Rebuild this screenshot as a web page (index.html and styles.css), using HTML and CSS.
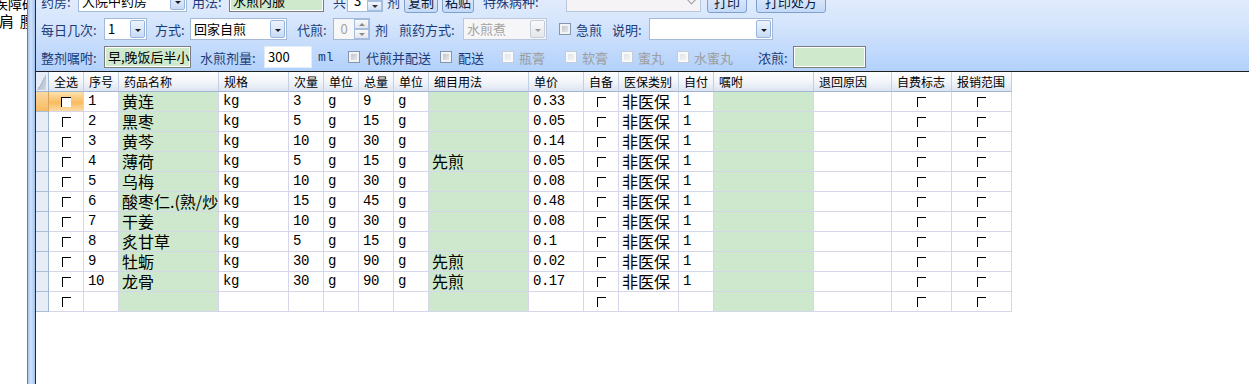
FILE: index.html
```html
<!DOCTYPE html>
<html lang="zh-CN">
<head>
    <meta charset="UTF-8">
    <title>处方录入</title>
    <link rel="stylesheet" href="styles.css">
</head>
<body>
<div class="window">
    <div class="side">
        <p class="l1">疾障碍</p>
        <p class="l2"><span>肩</span><span>腰</span></p>
    </div>
    <div class="splitter"></div>

    <div class="main">
        <div class="toolbar">
            <div class="tb-row">
                <span class="lbl w-pharmacy">药房:</span>
                <div class="combo w-pharmacy-box"><span class="val">大院中药房</span><span class="drop"></span></div>
                <span class="lbl w-usage">用法:</span>
                <div class="field green w-usage-box">水煎内服</div>
                <span class="lbl w-total">共</span>
                <div class="spin w-total-box"><span class="val">3</span><span class="arrows"><b class="up"></b><b class="down"></b></span></div>
                <span class="lbl w-ji1">剂</span>
                <div class="btn w-copy">复制</div>
                <div class="btn w-paste">粘贴</div>
                <span class="lbl w-disease">特殊病种:</span>
                <div class="combo flat w-disease-box"><span class="val"></span><span class="drop"></span></div>
                <div class="btn w-print">打印</div>
                <div class="btn w-print-rx">打印处方</div>
            </div>

            <div class="tb-row">
                <span class="lbl w-times">每日几次:</span>
                <div class="combo w-times-box"><span class="val">1</span><span class="drop"></span></div>
                <span class="lbl w-mode">方式:</span>
                <div class="combo w-mode-box"><span class="val">回家自煎</span><span class="drop"></span></div>
                <span class="lbl w-agent">代煎:</span>
                <div class="spin off w-agent-box"><span class="val">0</span><span class="arrows"><b class="up"></b><b class="down"></b></span></div>
                <span class="lbl w-ji2">剂</span>
                <span class="lbl w-method">煎药方式:</span>
                <div class="combo off w-method-box"><span class="val">水煎煮</span><span class="drop"></span></div>
                <label class="check w-urgent"><span class="chk"></span><span class="lbl">急煎</span></label>
                <span class="lbl w-note">说明:</span>
                <div class="combo w-note-box"><span class="val"></span><span class="drop"></span></div>
            </div>

            <div class="tb-row">
                <span class="lbl w-advice">整剂嘱咐:</span>
                <div class="field green w-advice-box">早,晚饭后半小时</div>
                <span class="lbl w-dose">水煎剂量:</span>
                <div class="field plain w-dose-box">300</div>
                <span class="lbl mono w-ml">ml</span>
                <label class="check w-deliver-agent"><span class="chk"></span><span class="lbl">代煎并配送</span></label>
                <label class="check w-deliver"><span class="chk"></span><span class="lbl">配送</span></label>
                <label class="check w-paste-jar"><span class="chk off"></span><span class="lbl off">瓶膏</span></label>
                <label class="check w-soft"><span class="chk off"></span><span class="lbl off">软膏</span></label>
                <label class="check w-pill"><span class="chk off"></span><span class="lbl off">蜜丸</span></label>
                <label class="check w-water-pill"><span class="chk off"></span><span class="lbl off">水蜜丸</span></label>
                <span class="lbl w-thick">浓煎:</span>
                <div class="field green w-thick-box"></div>
            </div>
        </div>

        <div class="grid">
            <div class="row head">
                <div class="c corner"></div>
                <div class="c">全选</div>
                <div class="c">序号</div>
                <div class="c">药品名称</div>
                <div class="c">规格</div>
                <div class="c">次量</div>
                <div class="c">单位</div>
                <div class="c">总量</div>
                <div class="c">单位</div>
                <div class="c">细目用法</div>
                <div class="c">单价</div>
                <div class="c">自备</div>
                <div class="c">医保类别</div>
                <div class="c">自付</div>
                <div class="c">嘱咐</div>
                <div class="c">退回原因</div>
                <div class="c">自费标志</div>
                <div class="c">报销范围</div>
            </div>

            <div class="row sel">
                <div class="c rh"></div><div class="c ck"><i class="tick"></i></div><div class="c n">1</div>
                <div class="c g cj">黄连</div><div class="c n">kg</div><div class="c n">3</div><div class="c n">g</div>
                <div class="c n">9</div><div class="c n">g</div><div class="c g cj"></div><div class="c n">0.33</div>
                <div class="c ck"><i class="tick"></i></div><div class="c cj">非医保</div><div class="c n">1</div>
                <div class="c g"></div><div class="c"></div><div class="c ck"><i class="tick"></i></div><div class="c ck"><i class="tick"></i></div>
            </div>
            <div class="row">
                <div class="c rh"></div><div class="c ck"><i class="tick"></i></div><div class="c n">2</div>
                <div class="c g cj">黑枣</div><div class="c n">kg</div><div class="c n">5</div><div class="c n">g</div>
                <div class="c n">15</div><div class="c n">g</div><div class="c g cj"></div><div class="c n">0.05</div>
                <div class="c ck"><i class="tick"></i></div><div class="c cj">非医保</div><div class="c n">1</div>
                <div class="c g"></div><div class="c"></div><div class="c ck"><i class="tick"></i></div><div class="c ck"><i class="tick"></i></div>
            </div>
            <div class="row">
                <div class="c rh"></div><div class="c ck"><i class="tick"></i></div><div class="c n">3</div>
                <div class="c g cj">黄芩</div><div class="c n">kg</div><div class="c n">10</div><div class="c n">g</div>
                <div class="c n">30</div><div class="c n">g</div><div class="c g cj"></div><div class="c n">0.14</div>
                <div class="c ck"><i class="tick"></i></div><div class="c cj">非医保</div><div class="c n">1</div>
                <div class="c g"></div><div class="c"></div><div class="c ck"><i class="tick"></i></div><div class="c ck"><i class="tick"></i></div>
            </div>
            <div class="row">
                <div class="c rh"></div><div class="c ck"><i class="tick"></i></div><div class="c n">4</div>
                <div class="c g cj">薄荷</div><div class="c n">kg</div><div class="c n">5</div><div class="c n">g</div>
                <div class="c n">15</div><div class="c n">g</div><div class="c g cj">先煎</div><div class="c n">0.05</div>
                <div class="c ck"><i class="tick"></i></div><div class="c cj">非医保</div><div class="c n">1</div>
                <div class="c g"></div><div class="c"></div><div class="c ck"><i class="tick"></i></div><div class="c ck"><i class="tick"></i></div>
            </div>
            <div class="row">
                <div class="c rh"></div><div class="c ck"><i class="tick"></i></div><div class="c n">5</div>
                <div class="c g cj">乌梅</div><div class="c n">kg</div><div class="c n">10</div><div class="c n">g</div>
                <div class="c n">30</div><div class="c n">g</div><div class="c g cj"></div><div class="c n">0.08</div>
                <div class="c ck"><i class="tick"></i></div><div class="c cj">非医保</div><div class="c n">1</div>
                <div class="c g"></div><div class="c"></div><div class="c ck"><i class="tick"></i></div><div class="c ck"><i class="tick"></i></div>
            </div>
            <div class="row">
                <div class="c rh"></div><div class="c ck"><i class="tick"></i></div><div class="c n">6</div>
                <div class="c g cj">酸枣仁.(熟/炒)</div><div class="c n">kg</div><div class="c n">15</div><div class="c n">g</div>
                <div class="c n">45</div><div class="c n">g</div><div class="c g cj"></div><div class="c n">0.48</div>
                <div class="c ck"><i class="tick"></i></div><div class="c cj">非医保</div><div class="c n">1</div>
                <div class="c g"></div><div class="c"></div><div class="c ck"><i class="tick"></i></div><div class="c ck"><i class="tick"></i></div>
            </div>
            <div class="row">
                <div class="c rh"></div><div class="c ck"><i class="tick"></i></div><div class="c n">7</div>
                <div class="c g cj">干姜</div><div class="c n">kg</div><div class="c n">10</div><div class="c n">g</div>
                <div class="c n">30</div><div class="c n">g</div><div class="c g cj"></div><div class="c n">0.08</div>
                <div class="c ck"><i class="tick"></i></div><div class="c cj">非医保</div><div class="c n">1</div>
                <div class="c g"></div><div class="c"></div><div class="c ck"><i class="tick"></i></div><div class="c ck"><i class="tick"></i></div>
            </div>
            <div class="row">
                <div class="c rh"></div><div class="c ck"><i class="tick"></i></div><div class="c n">8</div>
                <div class="c g cj">炙甘草</div><div class="c n">kg</div><div class="c n">5</div><div class="c n">g</div>
                <div class="c n">15</div><div class="c n">g</div><div class="c g cj"></div><div class="c n">0.1</div>
                <div class="c ck"><i class="tick"></i></div><div class="c cj">非医保</div><div class="c n">1</div>
                <div class="c g"></div><div class="c"></div><div class="c ck"><i class="tick"></i></div><div class="c ck"><i class="tick"></i></div>
            </div>
            <div class="row">
                <div class="c rh"></div><div class="c ck"><i class="tick"></i></div><div class="c n">9</div>
                <div class="c g cj">牡蛎</div><div class="c n">kg</div><div class="c n">30</div><div class="c n">g</div>
                <div class="c n">90</div><div class="c n">g</div><div class="c g cj">先煎</div><div class="c n">0.02</div>
                <div class="c ck"><i class="tick"></i></div><div class="c cj">非医保</div><div class="c n">1</div>
                <div class="c g"></div><div class="c"></div><div class="c ck"><i class="tick"></i></div><div class="c ck"><i class="tick"></i></div>
            </div>
            <div class="row">
                <div class="c rh"></div><div class="c ck"><i class="tick"></i></div><div class="c n">10</div>
                <div class="c g cj">龙骨</div><div class="c n">kg</div><div class="c n">30</div><div class="c n">g</div>
                <div class="c n">90</div><div class="c n">g</div><div class="c g cj">先煎</div><div class="c n">0.17</div>
                <div class="c ck"><i class="tick"></i></div><div class="c cj">非医保</div><div class="c n">1</div>
                <div class="c g"></div><div class="c"></div><div class="c ck"><i class="tick"></i></div><div class="c ck"><i class="tick"></i></div>
            </div>
            <div class="row">
                <div class="c rh"></div><div class="c ck"><i class="tick"></i></div><div class="c n"></div>
                <div class="c g cj"></div><div class="c n"></div><div class="c n"></div><div class="c n"></div>
                <div class="c n"></div><div class="c n"></div><div class="c g cj"></div><div class="c n"></div>
                <div class="c ck"><i class="tick"></i></div><div class="c cj"></div><div class="c n"></div>
                <div class="c g"></div><div class="c"></div><div class="c ck"><i class="tick"></i></div><div class="c ck"><i class="tick"></i></div>
            </div>
        </div>
    </div>
</div>
</body>
</html>
```

FILE: styles.css
```css
html, body {
    margin: 0;
    height: 100%;
    overflow: hidden;
}

body {
    font-family: "Noto Sans CJK SC", "Liberation Sans", sans-serif;
    font-size: 13px;
    color: #000;
    background: #fff;
}

.window {
    display: flex;
    height: 100%;
}

/* left pane, mostly hidden behind the splitter */
.side {
    width: 27px;
    flex: none;
    overflow: hidden;
    font-size: 14px;
    line-height: 18px;
    white-space: nowrap;
}
.side p { margin: 0; }
.side .l1 { margin: -6px 0 0 -6px; }
.side .l2 {
    display: flex;
    gap: 6px;
    margin-left: -1px;
    font-size: 15px;
}

.splitter {
    width: 7px;
    flex: none;
    border-left: 1px solid #7b7b7b;
    background: linear-gradient(to right, #a9c7f0, #d0e2f9 45%, #a2c1ee);
}

.main {
    flex: 1;
    min-width: 0;
    border-left: 1px solid #2c2c2c;
}

/* ---------- toolbar ---------- */
.toolbar {
    margin-top: -13px;
    padding-left: 5px;
    background: linear-gradient(#e6effd, #d7e6fc 40%, #b2d1fb);
    border-bottom: 1px solid #1e1e1e;
}

.tb-row {
    display: flex;
    align-items: center;
    height: 28px;
}
.tb-row > * {
    flex: none;
    box-sizing: border-box;
}

.lbl {
    color: #1b3b78;
    white-space: nowrap;
}
.lbl.off { color: #9d9d9d; }
.mono { font-family: "Liberation Mono", monospace; }

.combo {
    display: flex;
    height: 22px;
    border: 1px solid #a3b9d8;
    background: #fff;
}
.combo .val {
    flex: 1;
    padding-left: 3px;
    line-height: 20px;
    overflow: hidden;
    white-space: nowrap;
}
.combo .drop {
    width: 15px;
    margin: 1px;
    box-sizing: border-box;
    border: 1px solid #98b4df;
    border-radius: 2px;
    background: linear-gradient(#eef4fd, #c8dcf6);
    display: flex;
    align-items: center;
    justify-content: center;
}
.combo .drop::after {
    content: "";
    margin-top: 2px;
    border-left: 3px solid transparent;
    border-right: 3px solid transparent;
    border-top: 3px solid #1c1c1c;
}
.combo.off {
    background: #f6f5f7;
    border-color: #b9c8dd;
}
.combo.off .val { color: #a3a3a3; }
.combo.off .drop {
    background: linear-gradient(#fafafa, #e4e6ea);
    border-color: #c3cedc;
}
.combo.off .drop::after { border-top-color: #9a9a9a; }
.combo.flat {
    background: #f6f3f6;
    border-color: #b7c7dc;
}
.combo.flat .drop {
    border: 0;
    background: none;
}
.combo.flat .drop::after {
    width: 6px;
    height: 6px;
    margin-top: -4px;
    border: 0;
    border-right: 1px solid #9b9b9b;
    border-bottom: 1px solid #9b9b9b;
    transform: rotate(45deg);
}

.spin {
    display: flex;
    height: 22px;
    border: 1px solid #a3b9d8;
    background: #fff;
}
.spin .val {
    flex: 1;
    text-align: center;
    line-height: 20px;
}
.spin .arrows {
    width: 15px;
    display: flex;
    flex-direction: column;
}
.spin .arrows b {
    flex: 1;
    border: 1px solid #a6bedf;
    background: linear-gradient(#f2f7fe, #cfe0f7);
    display: flex;
    align-items: center;
    justify-content: center;
}
.spin .up::after {
    content: "";
    border-left: 3px solid transparent;
    border-right: 3px solid transparent;
    border-bottom: 3px solid #333;
}
.spin .down::after {
    content: "";
    border-left: 3px solid transparent;
    border-right: 3px solid transparent;
    border-top: 3px solid #333;
}
.spin.off { background: #f7f7f8; }
.spin.off .val { color: #a3a3a3; }
.spin.off .arrows b { background: linear-gradient(#fafafa, #e2e6ec); }
.spin.off .up::after { border-bottom-color: #8a8a8a; }
.spin.off .down::after { border-top-color: #8a8a8a; }

.btn {
    height: 23px;
    border: 1px solid #7f9fcf;
    border-radius: 3px;
    background: linear-gradient(#ebf3fe, #d4e4fa 50%, #c3d9f6);
    display: flex;
    align-items: center;
    justify-content: center;
    color: #0c1a3a;
}

.field {
    height: 22px;
    line-height: 20px;
    padding-left: 3px;
    border: 1px solid #7c7c7c;
    background: #fff;
    white-space: nowrap;
    overflow: hidden;
}
.field.green {
    background: #cfe9cc;
    box-shadow: inset 1px 1px 0 #fff, inset -1px -1px 0 #fff;
}
.field.plain { border-color: #e4ecf8; }

.check {
    display: flex;
    align-items: center;
    gap: 5px;
}
.chk {
    flex: none;
    width: 12px;
    height: 12px;
    box-sizing: border-box;
    border: 1px solid #8597ae;
    background: linear-gradient(135deg, #b7bcc5, #eff0f2);
    box-shadow: inset 0 0 0 2px #f3f3f3;
}
.chk.off {
    border-color: #c3cddb;
    background: linear-gradient(135deg, #dde0e5, #f7f7f8);
    box-shadow: inset 0 0 0 2px #fafafa;
}

/* toolbar widths, row 1 */
.w-pharmacy { width: 37px; }
.w-pharmacy-box { width: 109px; }
.w-usage { width: 37px; margin-left: 5px; }
.w-usage-box { width: 95px; }
.w-total { width: 14px; margin-left: 9px; }
.w-total-box { width: 36px; }
.w-ji1 { width: 17px; margin-left: 4px; }
.w-copy { width: 34px; }
.w-paste { width: 32px; margin-left: 4px; }
.w-disease { width: 83px; margin-left: 9px; }
.w-disease-box { width: 135px; }
.w-print { width: 40px; margin-left: 6px; }
.w-print-rx { width: 70px; margin-left: 9px; }

/* row 2 */
.w-times { width: 63px; }
.w-times-box { width: 43px; }
.w-mode { width: 35px; margin-left: 8px; }
.w-mode-box { width: 97px; }
.w-agent { width: 36px; margin-left: 10px; }
.w-agent-box { width: 37px; }
.w-ji2 { width: 24px; margin-left: 5px; }
.w-method { width: 64px; }
.w-method-box { width: 84px; }
.w-urgent { width: 53px; margin-left: 12px; }
.w-note { width: 37px; }
.w-note-box { width: 124px; }

/* row 3 */
.w-advice { width: 63px; }
.w-advice-box { width: 87px; }
.w-dose { width: 64px; margin-left: 9px; }
.w-dose-box { width: 48px; }
.w-ml { width: 30px; margin-left: 6px; }
.w-deliver-agent { width: 92px; gap: 6px; }
.w-deliver { width: 62px; gap: 6px; }
.w-paste-jar { width: 63px; }
.w-soft { width: 56px; }
.w-pill { width: 56px; }
.w-water-pill { width: 81px; }
.w-thick { width: 35px; }
.w-thick-box { width: 73px; }

/* ---------- medicine grid ---------- */
.grid {
    width: 976px;
}

.row {
    display: grid;
    grid-template-columns: 13px 35px 35px 100px 70px 35px 35px 35px 35px 100px 55px 35px 60px 35px 100px 78px 60px 60px;
    height: 20px;
}

.c {
    box-sizing: border-box;
    height: 20px;
    padding-left: 4px;
    border-right: 1px solid #d6d6ea;
    border-bottom: 1px solid #d6d6ea;
    line-height: 19px;
    white-space: nowrap;
    overflow: hidden;
}

.head .c {
    padding-left: 5px;
    font-size: 12px;
    background: linear-gradient(#fdfdfe, #f1f4f9 55%, #dde4f1);
    border-right-color: #c3d0e3;
    border-bottom-color: #9fb5d1;
}
.head .corner {
    position: relative;
    padding: 0;
    background: #e6edf7;
    border-right-color: #9fb6d3;
}
.head .corner::after {
    content: "";
    position: absolute;
    left: 1px;
    top: 2px;
    width: 9px;
    height: 16px;
    background: linear-gradient(to bottom right, transparent 50%, #b4bfcf 50%, #d2d9e4);
}

.rh {
    padding: 0;
    background: #e6edf7;
    border-right-color: #9fb6d3;
    border-bottom-color: #a9bed8;
}

.g { background: #cde8cc; }
.cj {
    padding-left: 3px;
    font-size: 16px;
}
.n {
    font-family: "Liberation Mono", monospace;
    font-size: 14px;
    letter-spacing: -0.5px;
}

.ck {
    display: flex;
    align-items: center;
    justify-content: center;
    padding: 0;
}
.tick {
    width: 8px;
    height: 9px;
    margin-top: 1px;
    border-top: 1px solid #000;
    border-left: 1px solid #000;
}

.sel .rh {
    background: linear-gradient(#fbd8a0, #f6bb63);
    border-right-color: #d9a45a;
}
.sel .rh + .ck {
    background: linear-gradient(#fde2b0, #f7bc5e 55%, #fcdca6);
}
.sel .rh + .ck .tick {
    background: #fff;
    width: 9px;
    height: 9px;
}
```
